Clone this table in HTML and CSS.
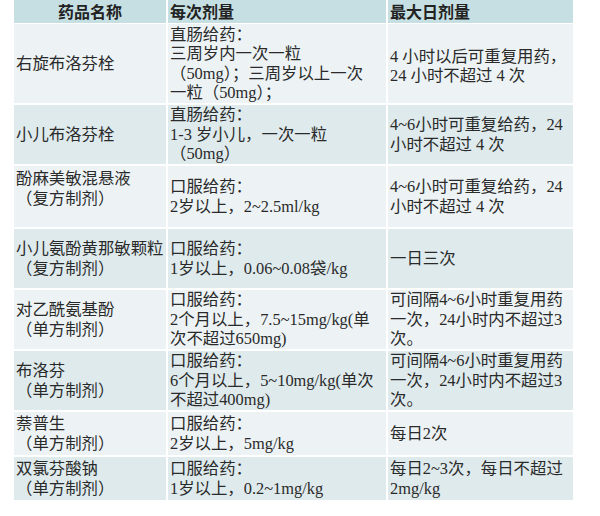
FILE: index.html
```html
<!DOCTYPE html>
<html lang="zh">
<head>
<meta charset="utf-8">
<link rel="stylesheet" href="styles.css">
</head>
<body>
<div class="dose-table">
  <div class="row head">
    <div class="cell center">药品名称</div>
    <div class="cell">每次剂量</div>
    <div class="cell">最大日剂量</div>
  </div>
  <div class="row light h79">
    <div class="cell">右旋布洛芬栓</div>
    <div class="cell">直肠给药：<br>三周岁内一次一粒<br>（50mg）；三周岁以上一次<br>一粒（50mg）；</div>
    <div class="cell nudge">4 小时以后可重复用药，<br>24 小时不超过 4 次</div>
  </div>
  <div class="row dark h59">
    <div class="cell">小儿布洛芬栓</div>
    <div class="cell">直肠给药：<br>1-3 岁小儿，一次一粒<br>（50mg）</div>
    <div class="cell">4~6小时可重复给药，24<br>小时不超过 4 次</div>
  </div>
  <div class="row light h61">
    <div class="cell top">酚麻美敏混悬液<br>（复方制剂）</div>
    <div class="cell">口服给药：<br>2岁以上，2~2.5ml/kg</div>
    <div class="cell">4~6小时可重复给药，24<br>小时不超过 4 次</div>
  </div>
  <div class="row dark h59">
    <div class="cell">小儿氨酚黄那敏颗粒<br>（复方制剂）</div>
    <div class="cell">口服给药：<br>1岁以上，0.06~0.08袋/kg</div>
    <div class="cell">一日三次</div>
  </div>
  <div class="row light h59">
    <div class="cell">对乙酰氨基酚<br>（单方制剂）</div>
    <div class="cell">口服给药：<br>2个月以上，7.5~15mg/kg(单<br>次不超过650mg)</div>
    <div class="cell">可间隔4~6小时重复用药<br>一次，24小时内不超过3<br>次。</div>
  </div>
  <div class="row dark h59">
    <div class="cell">布洛芬<br>（单方制剂）</div>
    <div class="cell">口服给药：<br>6个月以上，5~10mg/kg(单次<br>不超过400mg)</div>
    <div class="cell">可间隔4~6小时重复用药<br>一次，24小时内不超过3<br>次。</div>
  </div>
  <div class="row light h43">
    <div class="cell">萘普生<br>（单方制剂）</div>
    <div class="cell">口服给药：<br>2岁以上，5mg/kg</div>
    <div class="cell">每日2次</div>
  </div>
  <div class="row dark h43">
    <div class="cell">双氯芬酸钠<br>（单方制剂）</div>
    <div class="cell">口服给药：<br>1岁以上，0.2~1mg/kg</div>
    <div class="cell">每日2~3次，每日不超过<br>2mg/kg</div>
  </div>
</div>
</body>
</html>
```

FILE: styles.css
```css
html, body {
  margin: 0;
  padding: 0;
  background: #ffffff;
}

.dose-table {
  margin-left: 14px;
  width: 559px;
  display: flex;
  flex-direction: column;
  gap: 2px;
  font-family: "Liberation Serif", "Noto Sans CJK SC", serif;
  font-size: 16.4px;
  line-height: 19.5px;
  color: #2a2a2a;
}

.row {
  display: grid;
  grid-template-columns: 152px 218px 185px;
  column-gap: 2px;
}

.cell {
  display: flex;
  flex-direction: column;
  justify-content: center;
  padding: 0 2px;
  white-space: nowrap;
}

.head {
  height: 22px;
  font-family: "Noto Sans CJK SC", sans-serif;
  font-weight: 700;
  font-size: 16px;
  color: #222222;
}

.head .cell {
  background: #c6dfe3;
  justify-content: flex-start;
  line-height: 23.2px;
}

.center {
  align-items: center;
}

.top {
  justify-content: flex-start;
  padding-top: 3px;
}

.nudge {
  padding-top: 5px;
}

.light .cell {
  background: #edf3f5;
}

.dark .cell {
  background: #dfeaed;
}

.h79 { height: 79px; }
.h59 { height: 59px; }
.h61 { height: 61px; }
.h43 { height: 43px; }
```
